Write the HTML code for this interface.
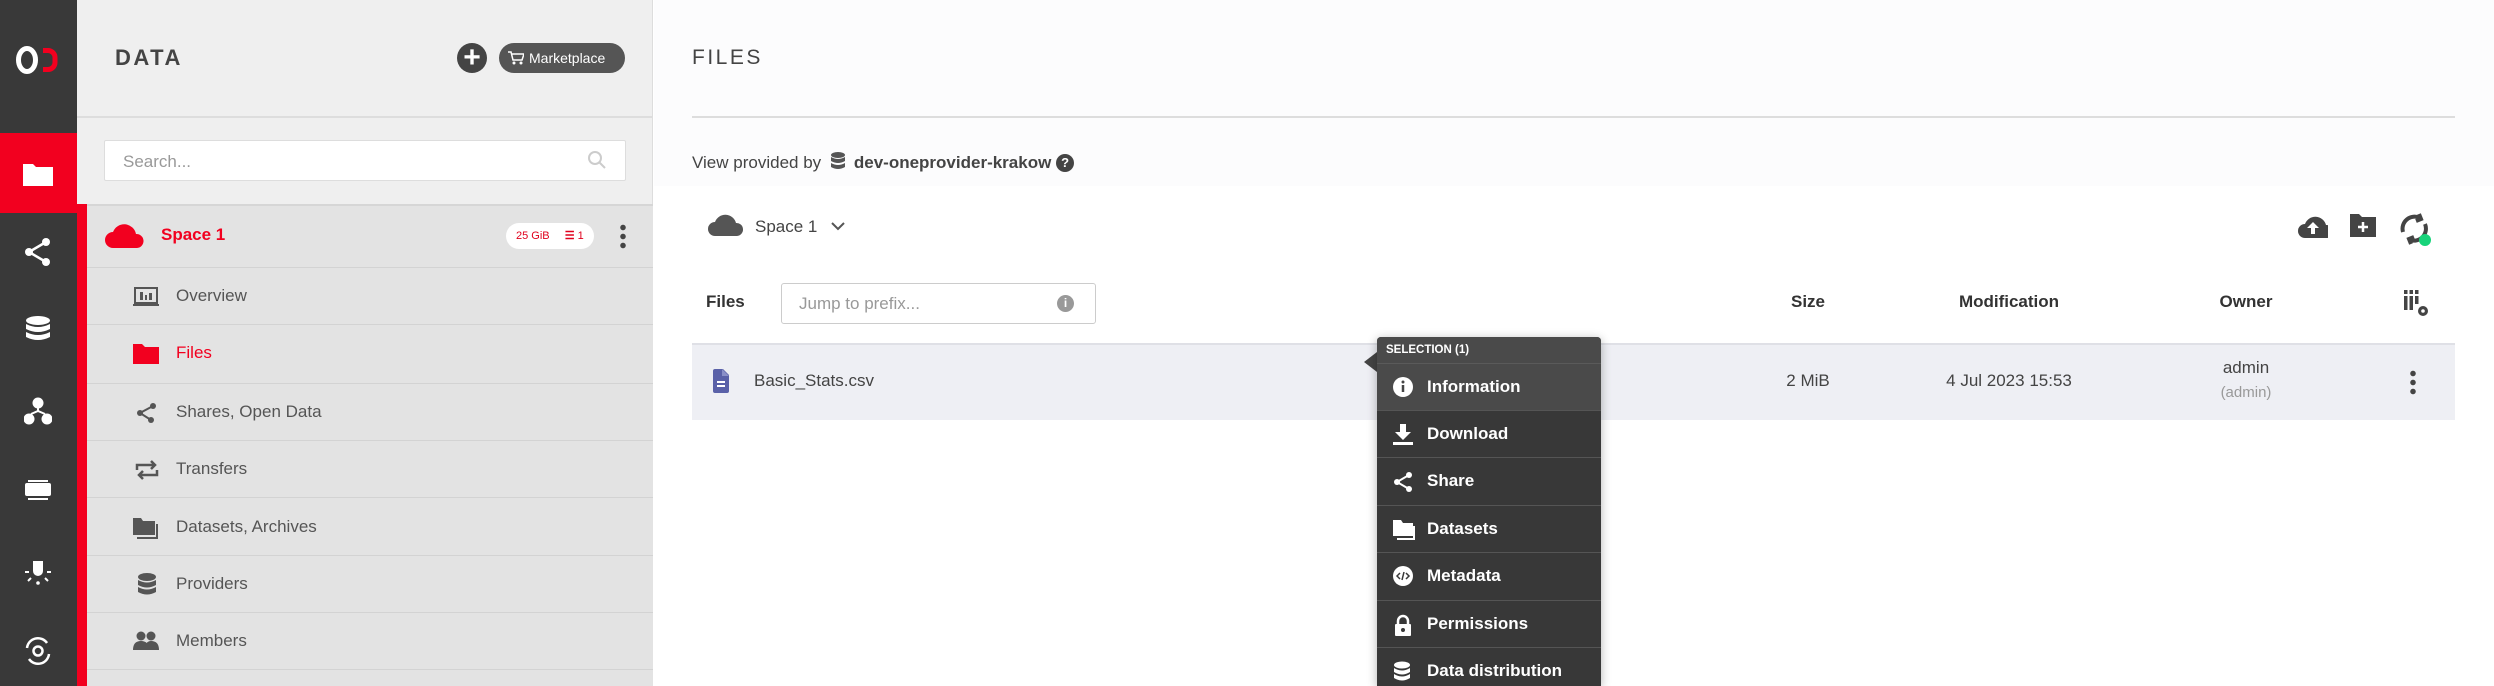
<!DOCTYPE html>
<html><head><meta charset="utf-8"><style>
*{margin:0;padding:0;box-sizing:border-box}
body{width:2494px;height:686px;overflow:hidden;background:#fff;font-family:"Liberation Sans",sans-serif;position:relative;color:#444}
.a{position:absolute}
.side{left:0;top:0;width:77px;height:686px;background:#393939}
.panel{left:77px;top:0;width:576px;height:686px;background:#efefef;border-right:1px solid #ddd}
.list{left:77px;top:204px;width:576px;height:482px;background:#e3e3e3;border-top:2px solid #d6d6d6}
.stripe{left:77px;top:204px;width:10px;height:482px;background:#f2001f}
.row{left:87px;width:566px;height:57px;border-bottom:1px solid #d3d3d3;font-size:17px;color:#555}
.row span{position:absolute;left:89px;top:18px}
.main{left:654px;top:0;width:1840px;height:186px;background:#fcfcfd}
.mi{left:1377px;width:224px;height:47px;border-top:1px solid #555;background:#383838;color:#fff;font-size:17px;font-weight:bold}
.mi span{position:absolute;left:50px;top:13px}
.mi svg{position:absolute;left:16px;top:13px}
</style></head><body>
<div class="a side"></div>
<svg class="a" style="left:16px;top:45px" width="46" height="30"><ellipse cx="11" cy="15" rx="8.5" ry="11.5" fill="none" stroke="#fff" stroke-width="5"/><path d="M27 5.5h5a7 7 0 0 1 7 7v5a7 7 0 0 1-7 7h-5" fill="none" stroke="#f2001f" stroke-width="5"/></svg>
<div class="a" style="left:0;top:133px;width:77px;height:80px;background:#f2001f"></div>
<svg class="a" style="left:23px;top:162px" width="30" height="24"><path d="M0 2h10l3 3h17v19H0z" fill="#fff"/></svg>
<svg class="a" style="left:24px;top:238px" width="28" height="28" fill="#fff"><circle cx="22" cy="4" r="4"/><circle cx="5" cy="14" r="4"/><circle cx="22" cy="24" r="4"/><path d="M22 4 5 14 22 24" stroke="#fff" stroke-width="2.5" fill="none"/></svg>
<svg class="a" style="left:25px;top:316px" width="26" height="28" fill="#fff"><ellipse cx="13" cy="4.5" rx="12" ry="4.5"/><path d="M1 8q12 6 24 0v5q-12 6-24 0zM1 16q12 6 24 0v5q-12 6-24 0z"/></svg>
<svg class="a" style="left:24px;top:397px" width="28" height="28" fill="#fff"><circle cx="14" cy="6" r="5.5"/><circle cx="5" cy="22" r="5.5"/><circle cx="23" cy="22" r="5.5"/><path d="M14 11v4M7 17l7-3 7 3" stroke="#fff" stroke-width="2" fill="none"/></svg>
<svg class="a" style="left:24px;top:479px" width="28" height="22"><rect x="1" y="4" width="26" height="13" rx="2" fill="#fff"/><path d="M4 2h20M4 20h20" stroke="#fff" stroke-width="2"/></svg>
<svg class="a" style="left:24px;top:558px" width="28" height="28" fill="#fff"><path d="M9 3h10v10a5 5 0 0 1-10 0z"/><circle cx="14" cy="25" r="1.8"/><path d="M1 14h4M23 14h4M4 23l3-3M24 23l-3-3" stroke="#fff" stroke-width="2"/></svg>
<svg class="a" style="left:23px;top:636px" width="30" height="30" fill="none" stroke="#fff" stroke-width="2.5"><path d="M4 12a11 11 0 0 1 20-5M26 18a11 11 0 0 1-20 5"/><circle cx="15" cy="15" r="4.5"/></svg>

<div class="a panel"></div>
<div class="a" style="left:77px;top:116px;width:576px;height:2px;background:#ddd"></div>
<div class="a" style="left:115px;top:45px;font-size:22px;font-weight:bold;letter-spacing:2.5px;color:#444">DATA</div>
<div class="a" style="left:457px;top:43px;width:30px;height:30px;border-radius:50%;background:#444;color:#fff;font-size:30px;line-height:29px;text-align:center;font-weight:bold">+</div>
<div class="a" style="left:499px;top:43px;width:126px;height:30px;border-radius:15px;background:#555;color:#fff;font-size:14px;line-height:30px;padding-left:30px">Marketplace</div>
<svg class="a" style="left:508px;top:51px" width="16" height="14" fill="#fff"><path d="M0 1h3l2 8h9l2-6H4" stroke="#fff" stroke-width="1.5" fill="none"/><circle cx="6" cy="12" r="1.5"/><circle cx="13" cy="12" r="1.5"/></svg>
<div class="a" style="left:104px;top:140px;width:522px;height:41px;background:#fff;border:1px solid #ddd;border-radius:2px;font-size:17px;color:#999;padding:11px 0 0 18px">Search...</div>
<svg class="a" style="left:587px;top:150px" width="20" height="20" fill="none" stroke="#ccc" stroke-width="2"><circle cx="8" cy="8" r="6"/><path d="M12.5 12.5 18 18"/></svg>
<div class="a list"></div>
<div class="a stripe"></div>
<div class="a" style="left:87px;top:206px;width:566px;height:62px;border-bottom:1px solid #d3d3d3"></div>
<svg class="a" style="left:105px;top:222px" width="40" height="26"><path d="M8 26a8 8 0 0 1 0-16 12 12 0 0 1 23 2 7 7 0 0 1 1 14z" fill="#f2001f"/></svg>
<div class="a" style="left:161px;top:225px;font-size:17px;font-weight:bold;color:#f2001f">Space 1</div>
<div class="a" style="left:506px;top:223px;width:88px;height:26px;border-radius:13px;background:#fff;font-size:11px;color:#e0001c;line-height:26px;padding-left:10px">25 GiB <span style="margin-left:12px;font-weight:bold">☰</span> 1</div>
<div class="a" style="left:620px;top:223px;width:6px;height:26px;background:radial-gradient(circle,#444 2.5px,transparent 3px) 0 0/6px 9px"></div>
<div class="a row" style="top:268px"><svg class="a" style="left:46px;top:19px" width="26" height="19"><rect x="2" y="1" width="22" height="15" fill="none" stroke="#555" stroke-width="2"/><path d="M0 18h26" stroke="#555" stroke-width="2"/><path d="M7 5h3v8H7zM12 8h2v5h-2zM16 6h3v7h-3z" fill="#555"/></svg><span>Overview</span></div>
<div class="a row" style="top:325px;height:59px"><svg class="a" style="left:46px;top:18px" width="26" height="21"><path d="M0 1h9l3 3h14v17H0z" fill="#f2001f"/></svg><span style="color:#f2001f">Files</span></div>
<div class="a row" style="top:384px"><svg class="a" style="left:49px;top:18px" width="22" height="22" fill="#555"><circle cx="17" cy="4" r="3"/><circle cx="4" cy="11" r="3"/><circle cx="15" cy="18" r="3"/><path d="M17 4 4 11 15 18" stroke="#555" stroke-width="2" fill="none"/></svg><span>Shares, Open Data</span></div>
<div class="a row" style="top:441px"><svg class="a" style="left:48px;top:17px" width="24" height="24" fill="none" stroke="#555" stroke-width="2.5"><path d="M2 12V7h18M16 3l4 4-4 4M22 12v5H4M8 21l-4-4 4-4"/></svg><span>Transfers</span></div>
<div class="a row" style="top:499px"><svg class="a" style="left:46px;top:18px" width="26" height="22" fill="#555"><path d="M0 1h8l2 3h12v14H0z"/><path d="M4 21h20V7" stroke="#555" stroke-width="2" fill="none"/></svg><span>Datasets, Archives</span></div>
<div class="a row" style="top:556px"><svg class="a" style="left:50px;top:17px" width="20" height="24" fill="#555"><ellipse cx="10" cy="4" rx="9" ry="4"/><path d="M1 7q9 5 18 0v5q-9 5-18 0zM1 14q9 5 18 0v5q-9 5-18 0z"/></svg><span>Providers</span></div>
<div class="a row" style="top:613px"><svg class="a" style="left:46px;top:18px" width="26" height="20" fill="#555"><circle cx="8" cy="5" r="4.5"/><circle cx="18" cy="5" r="4.5"/><path d="M0 19q0-9 8-9t8 9zM12 19q0-9 6-9 8 0 8 9z"/></svg><span>Members</span></div>

<div class="a main"></div>
<div class="a" style="left:692px;top:46px;font-size:21px;letter-spacing:2.5px;color:#444">FILES</div>
<div class="a" style="left:692px;top:116px;width:1763px;height:2px;background:#ddd"></div>
<div class="a" style="left:692px;top:151px;font-size:17px;color:#444">View provided by <svg width="16" height="20" style="vertical-align:-3px;margin:0 8px 0 4px" fill="#555"><ellipse cx="8" cy="4" rx="7" ry="3"/><path d="M1 6q7 4 14 0v4q-7 4-14 0zM1 12q7 4 14 0v4q-7 4-14 0z"/></svg><b>dev-oneprovider-krakow</b> <span style="display:inline-block;width:18px;height:18px;border-radius:50%;background:#444;color:#fff;font-size:13px;text-align:center;line-height:18px;font-weight:bold;vertical-align:1px">?</span></div>
<svg class="a" style="left:708px;top:212px" width="36" height="24"><path d="M7 24a7 7 0 0 1 0-14 11 11 0 0 1 21 1 6.5 6.5 0 0 1 1 13z" fill="#555"/></svg>
<div class="a" style="left:755px;top:217px;font-size:17px;color:#444">Space 1</div>
<svg class="a" style="left:831px;top:221px" width="14" height="10" fill="none" stroke="#555" stroke-width="2"><path d="M1 2l6 6 6-6"/></svg>
<svg class="a" style="left:2298px;top:214px" width="30" height="24" fill="#444"><path d="M7 24a7 7 0 0 1 0-14 11 11 0 0 1 21 1 6.5 6.5 0 0 1 1 13z"/><path d="M15 8l-6 6h4v6h4v-6h4z" fill="#fff"/></svg>
<svg class="a" style="left:2350px;top:213px" width="26" height="24" fill="#444"><path d="M0 1h9l3 3h14v20H0z"/><path d="M8 14h10M13 9v10" stroke="#fff" stroke-width="2.5"/></svg>
<svg class="a" style="left:2398px;top:212px" width="36" height="36" fill="none" stroke="#444" stroke-width="4"><path d="M5 20a12 12 0 0 1 17-14M21 2l2 5-5 2M27 12a12 12 0 0 1-15 16M13 32l-2-5 5-2"/><circle cx="27" cy="28" r="6" fill="#17d37a" stroke="none"/></svg>

<div class="a" style="left:706px;top:292px;font-size:17px;font-weight:bold;color:#333">Files</div>
<div class="a" style="left:781px;top:283px;width:315px;height:41px;border:1px solid #ccc;border-radius:3px;font-size:17px;color:#999;padding:10px 0 0 17px">Jump to prefix...</div>
<div class="a" style="left:1057px;top:295px;width:17px;height:17px;border-radius:50%;background:#999;color:#fff;font-size:12px;text-align:center;line-height:17px;font-weight:bold">i</div>
<div class="a" style="left:1768px;top:292px;width:80px;text-align:center;font-size:17px;font-weight:bold;color:#333">Size</div>
<div class="a" style="left:1909px;top:292px;width:200px;text-align:center;font-size:17px;font-weight:bold;color:#333">Modification</div>
<div class="a" style="left:2186px;top:292px;width:120px;text-align:center;font-size:17px;font-weight:bold;color:#333">Owner</div>
<svg class="a" style="left:2404px;top:290px" width="26" height="28" fill="#444"><rect x="0" y="0" width="3.5" height="4"/><rect x="5.5" y="0" width="3.5" height="4"/><rect x="11" y="0" width="3.5" height="4"/><rect x="0" y="6" width="3.5" height="14"/><rect x="5.5" y="6" width="3.5" height="14"/><rect x="11" y="6" width="3.5" height="8"/><circle cx="19" cy="21" r="5"/><circle cx="19" cy="21" r="1.8" fill="#fff"/></svg>

<div class="a" style="left:692px;top:343px;width:1763px;height:77px;background:#eeeff4;border-top:2px solid #dfe0e6"></div>
<svg class="a" style="left:713px;top:369px" width="16" height="24"><path d="M0 2a2 2 0 0 1 2-2h8l6 6v16a2 2 0 0 1-2 2H2a2 2 0 0 1-2-2z" fill="#5a61a8"/><path d="M4 13h8M4 17h8" stroke="#fff" stroke-width="2"/><path d="M9 0v7h7" fill="#8a90c8"/></svg>
<div class="a" style="left:754px;top:371px;font-size:17px;color:#444">Basic_Stats.csv</div>
<div class="a" style="left:1768px;top:371px;width:80px;text-align:center;font-size:17px;color:#444">2 MiB</div>
<div class="a" style="left:1909px;top:371px;width:200px;text-align:center;font-size:17px;color:#444">4 Jul 2023 15:53</div>
<div class="a" style="left:2186px;top:358px;width:120px;text-align:center;font-size:17px;color:#444">admin</div>
<div class="a" style="left:2186px;top:384px;width:120px;text-align:center;font-size:15px;color:#999">(admin)</div>
<div class="a" style="left:2410px;top:369px;width:6px;height:27px;background:radial-gradient(circle,#444 2.5px,transparent 3px) 0 0/6px 9px"></div>

<div class="a" style="left:1364px;top:352px;width:0;height:0;border-top:10px solid transparent;border-bottom:10px solid transparent;border-right:13px solid #444"></div>
<div class="a" style="left:1377px;top:337px;width:224px;height:349px;background:#383838;border-radius:4px 4px 0 0;box-shadow:0 2px 10px rgba(0,0,0,.3)"></div>
<div class="a" style="left:1377px;top:337px;width:224px;height:26px;background:#4a4a4a;border-radius:4px 4px 0 0;color:#fff;font-size:11.5px;font-weight:bold;padding:7px 0 0 9px">SELECTION (1)</div>
<div class="mi a" style="top:363px;background:#4a4a4a;border-top-color:#5a5a5a"><svg width="20" height="20"><circle cx="10" cy="10" r="10" fill="#fff"/><path d="M10 8v7" stroke="#444" stroke-width="2.5"/><circle cx="10" cy="5" r="1.5" fill="#444"/></svg><span>Information</span></div>
<div class="mi a" style="top:410px"><svg width="20" height="22" fill="#fff"><path d="M7 0h6v8h5l-8 8-8-8h5z"/><rect x="0" y="18" width="20" height="3"/></svg><span>Download</span></div>
<div class="mi a" style="top:457px"><svg width="20" height="22" fill="#fff"><circle cx="16" cy="4" r="3"/><circle cx="4" cy="11" r="3"/><circle cx="16" cy="18" r="3"/><path d="M16 4 4 11 16 18" stroke="#fff" stroke-width="2" fill="none"/></svg><span>Share</span></div>
<div class="mi a" style="top:505px"><svg width="22" height="22" fill="#fff"><path d="M0 1h8l2 3h10v13H0z"/><path d="M4 20h17V7" stroke="#fff" stroke-width="2" fill="none"/></svg><span>Datasets</span></div>
<div class="mi a" style="top:552px"><svg width="20" height="20"><circle cx="10" cy="10" r="10" fill="#fff"/><path d="M7 7l-3 3 3 3M13 7l3 3-3 3M11 6l-2 8" stroke="#383838" stroke-width="1.5" fill="none"/></svg><span>Metadata</span></div>
<div class="mi a" style="top:600px"><svg width="20" height="22" fill="#fff"><path d="M5 10V7a5 5 0 0 1 10 0v3" stroke="#fff" stroke-width="2.5" fill="none"/><rect x="2" y="10" width="16" height="12" rx="1"/><circle cx="10" cy="16" r="2" fill="#383838"/></svg><span>Permissions</span></div>
<div class="mi a" style="top:647px;height:39px"><svg width="18" height="22" fill="#fff"><ellipse cx="9" cy="4" rx="8" ry="3.5"/><path d="M1 7q8 5 16 0v4q-8 5-16 0zM1 13q8 5 16 0v4q-8 5-16 0z"/></svg><span>Data distribution</span></div>
</body></html>
